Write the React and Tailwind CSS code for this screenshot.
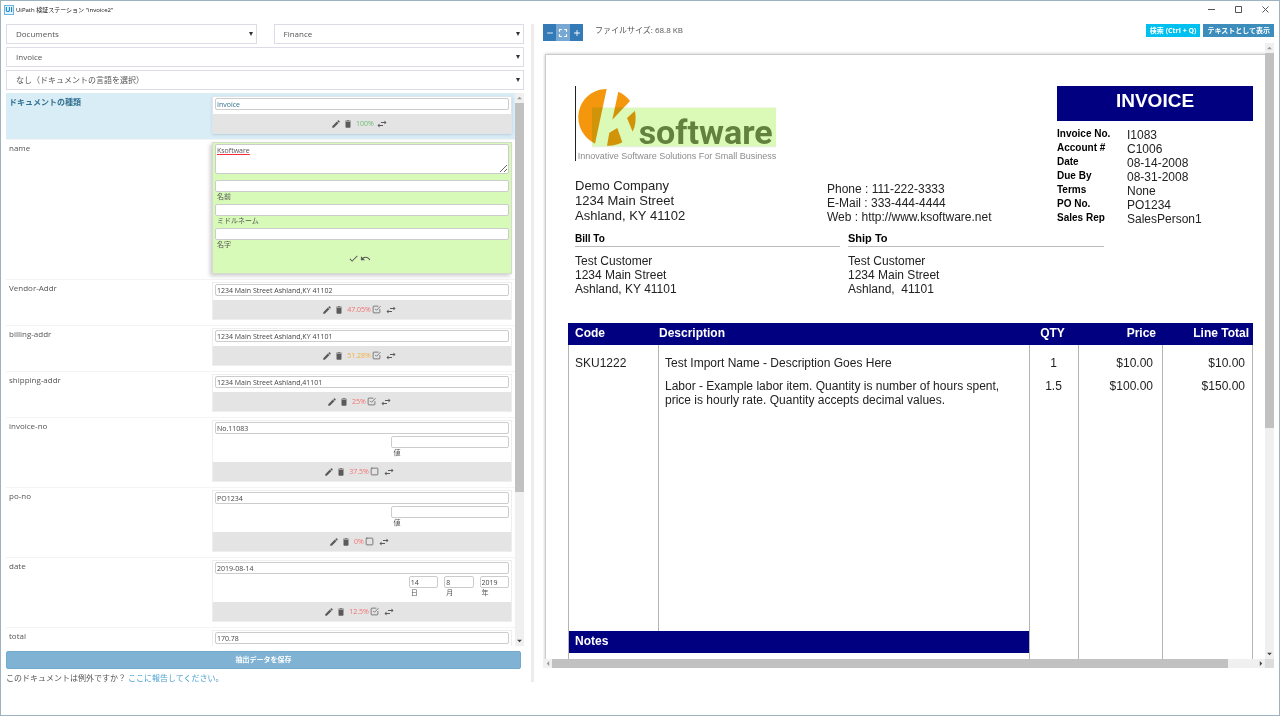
import { useState } from 'react';
import { MdEdit, MdDelete, MdSwapHoriz, MdCheck, MdUndo, MdFullscreen, MdAdd, MdRemove } from 'react-icons/md';
import { FiCheckSquare, FiSquare } from 'react-icons/fi';

const FIELDS = [
  { id: 'doctype', label: 'ドキュメントの種類', value: 'Invoice', score: '100%', tone: 'text-[#6cbd72]', highlight: true },
  { id: 'name', label: 'name', value: 'Ksoftware', editing: true, parts: ['名前', 'ミドルネーム', '名字'] },
  { id: 'vendor', label: 'Vendor-Addr', value: '1234 Main Street Ashland,KY 41102', score: '47.05%', tone: 'text-[#f47070]', checked: true },
  { id: 'billing', label: 'billing-addr', value: '1234 Main Street Ashland,KY 41101', score: '51.28%', tone: 'text-[#f0b040]', checked: true },
  { id: 'shipping', label: 'shipping-addr', value: '1234 Main Street Ashland,41101', score: '25%', tone: 'text-[#f47070]', checked: true },
  { id: 'invoiceno', label: 'invoice-no', value: 'No.11083', score: '37.5%', tone: 'text-[#f47070]', checked: false, parts: [{ label: '値', value: '' }] },
  { id: 'pono', label: 'po-no', value: 'PO1234', score: '0%', tone: 'text-[#f47070]', checked: false, parts: [{ label: '値', value: '' }] },
  { id: 'date', label: 'date', value: '2019-08-14', score: '12.5%', tone: 'text-[#f47070]', checked: true, parts: [{ label: '日', value: '14' }, { label: '月', value: '8' }, { label: '年', value: '2019' }] },
  { id: 'total', label: 'total', value: '170.78' },
];

const INVOICE_META = [
  ['Invoice No.', 'I1083'],
  ['Account #', 'C1006'],
  ['Date', '08-14-2008'],
  ['Due By', '08-31-2008'],
  ['Terms', 'None'],
  ['PO No.', 'PO1234'],
  ['Sales Rep', 'SalesPerson1'],
];

const inputClass = 'block h-3 w-full rounded-[2px] border border-[#ccc] bg-white px-px text-[7px] leading-[10px] text-[#444] focus:outline-none';

function Arrow({ dir, className }) {
  const points = { up: '0,4 3,1 6,4', down: '0,1 3,4 6,1', left: '4,0 1,3 4,6', right: '1,0 4,3 1,6' }[dir];
  const flat = dir === 'up' || dir === 'down';
  return (
    <svg viewBox={flat ? '0 0 6 5' : '0 0 5 6'} className={flat ? `h-1 w-[5px] ${className}` : `h-[5px] w-1 ${className}`} fill="currentColor">
      <polygon points={points} />
    </svg>
  );
}

function VerticalScrollbar({ thumb }) {
  return (
    <div className="flex w-[9px] shrink-0 flex-col bg-[#f0f0f0]">
      <div className="flex h-[10px] items-center justify-center"><Arrow dir="up" className="text-[#999]" /></div>
      <div className="min-h-0 flex-1">
        <div className="bg-[#c1c1c1]" style={{ height: `${thumb}%` }} />
      </div>
      <div className="flex h-[10px] items-center justify-center"><Arrow dir="down" className="text-[#444]" /></div>
    </div>
  );
}

function Dropdown({ label, value }) {
  return (
    <div className="relative flex-1">
      <select aria-label={label} className="block h-5 w-full appearance-none rounded-none border border-[#dcdce6] bg-white pl-[9px] pr-4 text-[8px] leading-[18px] text-[#555]">
        <option>{value}</option>
      </select>
      <svg viewBox="0 0 4 4" className="pointer-events-none absolute right-1 top-2 h-1 w-1 text-[#333]" fill="currentColor">
        <polygon points="0,0 4,0 2,4" />
      </svg>
    </div>
  );
}

function IconButton({ label, children }) {
  return (
    <button type="button" aria-label={label} className="flex h-[10px] w-[10px] items-center justify-center text-[#5a5a5a]">
      {children}
    </button>
  );
}

function ActionBar({ field }) {
  const [checked, setChecked] = useState(field.checked);
  return (
    <div className="flex h-[19px] items-center justify-center bg-[#e4e4e4] pr-[6px]">
      <IconButton label="編集"><MdEdit size={10} /></IconButton>
      <span className="w-[2px]" />
      <IconButton label="削除"><MdDelete size={10} /></IconButton>
      <span className={`ml-[3px] mr-px text-[7px] leading-[10px] ${field.tone}`}>{field.score}</span>
      {field.checked !== undefined ? (
        <label className="relative mr-1 flex h-[10px] w-[10px] items-center justify-center text-[#5a5a5a]">
          <input type="checkbox" aria-label={`${field.label} 確認`} checked={checked} onChange={(e) => setChecked(e.target.checked)} className="absolute inset-0 appearance-none" />
          {checked ? <FiCheckSquare size={9} /> : <FiSquare size={9} />}
        </label>
      ) : (
        <span className="w-[2px]" />
      )}
      <IconButton label="入れ替え"><MdSwapHoriz size={12} className="shrink-0" /></IconButton>
    </div>
  );
}

function EditingCard({ field }) {
  return (
    <div className="border border-[#d5dccf] bg-[#d8fab8] px-[2px] pt-px shadow-[-2px_2px_4px_rgba(0,0,0,0.2)]">
      <textarea id={field.id} defaultValue={field.value} spellCheck={false} className="block h-[30px] w-full rounded-[2px] border border-[#ccc] bg-white px-px pt-px text-[7px] leading-[10px] underline decoration-red-500 underline-offset-1 focus:outline-none" />
      <div className="pt-[6px]">
        {field.parts.map((part) => (
          <div key={part}>
            <input id={`${field.id}-${part}`} className={inputClass} />
            <label htmlFor={`${field.id}-${part}`} className="block h-3 pl-[2px] text-[7px] leading-[10px]">{part}</label>
          </div>
        ))}
      </div>
      <div className="flex h-[21px] items-start justify-center gap-[2px] pr-[6px] pt-px">
        <IconButton label="確定"><MdCheck size={11} className="shrink-0" /></IconButton>
        <IconButton label="元に戻す"><MdUndo size={11} className="shrink-0" /></IconButton>
      </div>
    </div>
  );
}

function ValueCard({ field }) {
  return (
    <div className={`border bg-white ${field.highlight ? 'border-[#dde6ea] shadow-sm' : 'border-[#eee]'}`}>
      <div className="px-[2px] pb-1 pt-px">
        <input id={field.id} defaultValue={field.value} className={field.highlight ? `${inputClass} text-[#31708f]!` : inputClass} />
        {field.parts && (
          <div className="flex h-[24px] justify-end gap-[6px] pt-[2px]">
            {field.parts.map((part) => (
              <div key={part.label} className={field.parts.length > 1 ? 'w-[10%]' : 'w-[40%]'}>
                <input id={`${field.id}-${part.label}`} defaultValue={part.value} className={inputClass} />
                <label htmlFor={`${field.id}-${part.label}`} className="block pl-[2px] text-[7px] leading-[10px]">{part.label}</label>
              </div>
            ))}
          </div>
        )}
      </div>
      {field.score && <ActionBar field={field} />}
    </div>
  );
}

function FieldRow({ field }) {
  return (
    <div className={`grid grid-cols-[203fr_300fr] border-t pb-[5px] pl-[3px] pr-[3px] pt-[2px] ${field.highlight ? 'border-[#d9edf7] bg-[#d9edf7] text-[#31708f]' : 'border-[#f4f4f4] text-[#555]'}`}>
      <label htmlFor={field.id} className={`text-[8px] leading-3 ${field.highlight ? 'font-bold' : ''}`}>{field.label}</label>
      <div className="min-w-0">
        {field.editing ? <EditingCard field={field} /> : <ValueCard field={field} />}
      </div>
    </div>
  );
}

function KsoftwareLogo() {
  return (
    <svg viewBox="135 261 612 228" className="ml-[7px] block h-[76px] w-[204px]" role="img" aria-label="Ksoftware">
      <rect x="135" y="261" width="3" height="225" fill="#222" />
      <g fill="#f4970c">
        <path d="M230 270 C182 270 145 308 145 355 C145 390 166 420 195 434 Z" />
        <path d="M265 278 C279 284 292 294 300 306 L247 362 Z" />
        <path d="M315 335 C319 358 317 379 308 398 L291 357 Z" />
        <path d="M262 387 L277 430 C263 437 248 441 231 440 L238 401 Z" />
      </g>
      <rect x="186" y="326" width="552" height="116" fill="#dbfab8" className="mix-blend-multiply drop-shadow-sm" />
      <text x="326" y="434" fontSize="102" fontWeight="bold" fill="#62813f" fontFamily="Roboto, sans-serif">software</text>
      <text x="143" y="479" fontSize="27" fill="#8c8c8c" fontFamily="'Liberation Sans', sans-serif">Innovative Software Solutions For Small Business</text>
    </svg>
  );
}

function InvoicePage() {
  return (
    <div className="ml-[2px] mt-[11px] w-[750px] border-l border-t border-[#ccc] bg-white pl-[22px] pr-[42px] pt-[31px] font-['Liberation_Sans',Arial,sans-serif] text-[12px] leading-[14px] text-[#222] shadow-[0_0_3px_rgba(0,0,0,0.25)]">
      <div className="flex justify-between">
        <div>
          <KsoftwareLogo />
          <div className="flex pl-[7px] pt-4">
            <div className="w-[252px] text-[13px] leading-[15px]">
              <p>Demo Company</p>
              <p>1234 Main Street</p>
              <p>Ashland, KY 41102</p>
            </div>
            <div className="pt-1">
              <p>Phone : 111-222-3333</p>
              <p>E-Mail : 333-444-4444</p>
              <p>Web : http://www.ksoftware.net</p>
            </div>
          </div>
        </div>
        <div className="w-[196px]">
          <h1 className="h-[35px] bg-[#000080] text-center text-[19px] font-bold leading-[30px] text-white">INVOICE</h1>
          <dl className="pt-[6px]">
            {INVOICE_META.map(([key, value]) => (
              <div key={key} className="flex h-[14px]">
                <dt className="w-[70px] text-[10px] font-bold leading-[14px] text-black">{key}</dt>
                <dd className="leading-[16px]">{value}</dd>
              </div>
            ))}
          </dl>
        </div>
      </div>

      <div className="flex gap-2 pl-[7px] pt-[6px]">
        <div className="w-[265px]">
          <h2 className="border-b border-[#bbb] text-[10px] font-bold leading-[15px] text-black">Bill To</h2>
          <div className="pt-[7px]">
            <p>Test Customer</p>
            <p>1234 Main Street</p>
            <p>Ashland, KY 41101</p>
          </div>
        </div>
        <div className="w-[256px]">
          <h2 className="border-b border-[#bbb] text-[11px] font-bold leading-[15px] text-black">Ship To</h2>
          <div className="pt-[7px]">
            <p>Test Customer</p>
            <p>1234 Main Street</p>
            <p className="whitespace-pre">Ashland,  41101</p>
          </div>
        </div>
      </div>

      <table className="mt-[27px] w-full table-fixed border-separate border-spacing-0 [&_td]:border-r [&_td]:border-[#b4b4b4] [&_td]:align-top [&_td:first-child]:border-l">
        <colgroup>
          <col className="w-[91px]" />
          <col className="w-[371px]" />
          <col className="w-[49px]" />
          <col className="w-[84px]" />
          <col />
        </colgroup>
        <thead>
          <tr className="h-[22px] bg-[#000080] text-left text-white">
            <th className="pb-[2px] pl-[7px]">Code</th>
            <th className="pb-[2px]">Description</th>
            <th className="pb-[2px] pr-1 text-center">QTY</th>
            <th className="pb-[2px] pr-[7px] text-right">Price</th>
            <th className="pb-[2px] pr-1 text-right">Line Total</th>
          </tr>
        </thead>
        <tbody>
          <tr className="h-[27px] [&>td]:pt-[11px]">
            <td className="pl-[6px]">SKU1222</td>
            <td className="pl-[6px] pr-5">Test Import Name - Description Goes Here</td>
            <td className="pr-px text-center">1</td>
            <td className="pr-[9px] text-right">$10.00</td>
            <td className="pr-[7px] text-right">$10.00</td>
          </tr>
          <tr className="h-[259px] [&>td]:pt-[7px]">
            <td />
            <td className="pl-[6px] pr-5">Labor - Example labor item. Quantity is number of hours spent, price is hourly rate. Quantity accepts decimal values.</td>
            <td className="pr-px text-center">1.5</td>
            <td className="pr-[9px] text-right">$100.00</td>
            <td className="pr-[7px] text-right">$150.00</td>
          </tr>
          <tr className="h-[22px]">
            <td colSpan={2} className="bg-[#000080] pl-[6px] pt-[3px] font-bold text-white">Notes</td>
            <td /><td /><td />
          </tr>
          <tr className="h-[220px]">
            <td colSpan={2} />
            <td /><td /><td />
          </tr>
        </tbody>
      </table>
    </div>
  );
}

function DocumentPane() {
  return (
    <section className="flex min-h-0 min-w-0 flex-col pb-[14px]">
      <div className="flex h-[17px] shrink-0 items-start">
        <div className="flex h-full text-white">
          <button type="button" aria-label="縮小" className="flex w-[13px] items-center justify-center bg-[#337ab7]"><MdRemove size={10} /></button>
          <button type="button" aria-label="全体表示" className="flex w-[14px] items-center justify-center bg-[#77a8d3]"><MdFullscreen size={14} /></button>
          <button type="button" aria-label="拡大" className="flex w-[13px] items-center justify-center bg-[#337ab7]"><MdAdd size={10} /></button>
        </div>
        <span className="pl-3 text-[8px] leading-3 text-[#555]">ファイルサイズ: 68.8 KB</span>
        <div className="ml-auto flex gap-[3px] text-[7px] font-bold leading-[13px] text-white">
          <button type="button" className="h-[13px] bg-[#00c0ef] px-1">検索 (Ctrl + Q)</button>
          <button type="button" className="h-[13px] bg-[#3c8dbc] px-1">テキストとして表示</button>
        </div>
      </div>
      <div className="mt-[2px] flex min-h-0 flex-1">
        <div className="min-w-0 flex-1 overflow-hidden"><InvoicePage /></div>
        <VerticalScrollbar thumb={63} />
      </div>
      <div className="flex h-[9px] shrink-0 bg-[#f0f0f0]">
        <div className="flex w-[9px] items-center justify-center"><Arrow dir="left" className="text-[#999]" /></div>
        <div className="flex-1"><div className="h-full w-[96%] bg-[#c1c1c1]" /></div>
        <div className="flex w-[9px] items-center justify-center"><Arrow dir="right" className="text-[#444]" /></div>
        <div className="w-[9px] bg-[#dcdcdc]" />
      </div>
    </section>
  );
}

function FieldPane() {
  return (
    <section className="flex min-h-0 min-w-0 flex-col">
      <div className="flex flex-col gap-[3px]">
        <div className="flex gap-[17px]">
          <Dropdown label="カテゴリ" value="Documents" />
          <Dropdown label="グループ" value="Finance" />
        </div>
        <div className="flex"><Dropdown label="種類" value="Invoice" /></div>
        <div className="flex"><Dropdown label="言語" value="なし（ドキュメントの言語を選択）" /></div>
      </div>
      <div className="mt-[3px] flex min-h-0 flex-1">
        <div className="min-w-0 flex-1 overflow-hidden">
          {FIELDS.map((field) => <FieldRow key={field.id} field={field} />)}
        </div>
        <VerticalScrollbar thumb={73} />
      </div>
      <button type="button" className="mr-[3px] mt-[5px] h-[18px] shrink-0 rounded-[2px] border border-[#72aace] bg-[#80b3d3] text-[7px] font-bold leading-4 text-white">抽出データを保存</button>
      <p className="h-[13px] shrink-0 pt-[3px] text-[8px] leading-3 text-[#555]">
        このドキュメントは例外ですか？ <a href="#report" className="text-[#4a9fd0]">ここに報告してください。</a>
      </p>
    </section>
  );
}

export default function App() {
  return (
    <div className="flex h-screen flex-col overflow-hidden border border-[#9fb2bf] bg-white font-['Open_Sans','Noto_Sans_CJK_JP',sans-serif] text-[#555]">
      <header className="flex h-[17px] shrink-0 items-center pl-[3px] pr-[10px]">
        <span className="flex h-[10px] w-[10px] items-center justify-center border border-[#6cb5e0] bg-[#e3f3fc] text-[7px] font-bold leading-none text-[#1583c6]">Ui</span>
        <span className="pl-[2px] text-[6px] leading-3 text-[#111]">UiPath 検証ステーション "invoice2"</span>
        <div className="ml-auto flex gap-[20px] text-[#555]">
          <button type="button" aria-label="最小化"><svg viewBox="0 0 7 7" className="h-[7px] w-[7px]" stroke="currentColor"><path d="M0 3.5H7" /></svg></button>
          <button type="button" aria-label="最大化"><svg viewBox="0 0 7 7" className="h-[7px] w-[7px]" stroke="currentColor" fill="none"><path d="M.5 .5H6.5V6.5H.5Z" /></svg></button>
          <button type="button" aria-label="閉じる"><svg viewBox="0 0 7 7" className="h-[7px] w-[7px]" stroke="currentColor"><path d="M.5 .5L6.5 6.5M6.5 .5L.5 6.5" /></svg></button>
        </div>
      </header>
      <main className="grid min-h-0 flex-1 grid-cols-[518fr_19px_731fr] grid-rows-[minmax(0,1fr)] pb-[33px] pl-[5px] pr-[5px] pt-[6px]">
        <FieldPane />
        <div className="ml-[7px] w-[3px] bg-[#ececec]" />
        <DocumentPane />
      </main>
    </div>
  );
}
